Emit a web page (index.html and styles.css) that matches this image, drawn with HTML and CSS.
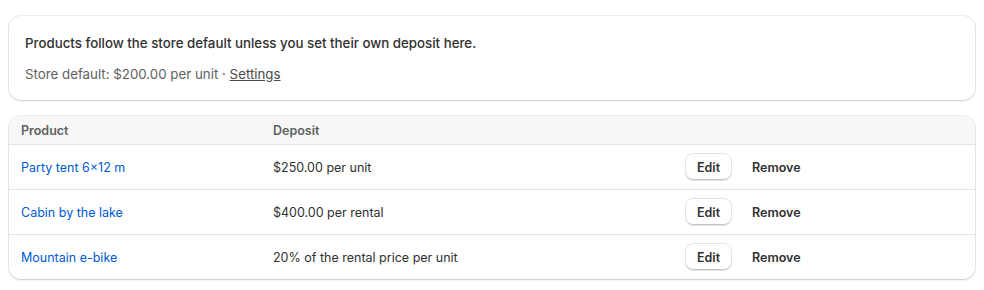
FILE: index.html
```html
<!DOCTYPE html>
<html lang="en">

<head>
    <meta charset="UTF-8">
    <meta name="viewport" content="width=device-width, initial-scale=1.0">
    <title>Product deposits</title>
    <link rel="stylesheet" href="styles.css">
</head>

<body>
    <div class="page">
        <div class="card intro">
            <p class="lead">Products follow the store default unless you set their own deposit here.</p>
            <p class="sub">Store default: $200.00 per unit · <a href="#" class="settings">Settings</a></p>
        </div>

        <div class="card table">
            <div class="row head">
                <div>Product</div>
                <div>Deposit</div>
                <div></div>
            </div>
            <div class="row">
                <div><a href="#" class="product">Party tent 6×12 m</a></div>
                <div>$250.00 per unit</div>
                <div class="actions">
                    <button class="edit">Edit</button>
                    <button class="remove">Remove</button>
                </div>
            </div>
            <div class="row">
                <div><a href="#" class="product">Cabin by the lake</a></div>
                <div>$400.00 per rental</div>
                <div class="actions">
                    <button class="edit">Edit</button>
                    <button class="remove">Remove</button>
                </div>
            </div>
            <div class="row">
                <div><a href="#" class="product">Mountain e-bike</a></div>
                <div>20% of the rental price per unit</div>
                <div class="actions">
                    <button class="edit">Edit</button>
                    <button class="remove">Remove</button>
                </div>
            </div>
        </div>
    </div>
</body>

</html>
```

FILE: styles.css
```css
body {
    margin: 0;
    padding: 0;
    font-family: 'Inter', 'Noto Sans', sans-serif;
    font-size: 13px;
    color: #303030;
    background: #ffffff;
}

.page {
    display: flex;
    flex-direction: column;
    gap: 16px;
    padding: 16px 9px;
}

.card {
    background: #ffffff;
    border-radius: 12px;
    box-shadow: 0 0 0 1px rgba(0, 0, 0, 0.07), 0 1px 2px rgba(0, 0, 0, 0.14);
    overflow: hidden;
}

.intro {
    padding: 17px 16px 16px;
    font-size: 13.3px;
}

.intro p {
    margin: 0;
    line-height: 20px;
}

.lead {
    font-weight: 500;
    color: #303030;
}

.sub {
    margin-top: 11px !important;
    color: #616161;
}

.settings {
    color: #4a4a4a;
    text-decoration: underline;
}

.table {
    font-size: 12.5px;
}

.row {
    display: grid;
    grid-template-columns: 252px 412px auto;
    align-items: center;
    padding: 0 12px;
    height: 44px;
    border-top: 1px solid #e3e3e3;
}

.row.head {
    height: 28px;
    border-top: none;
    background: #f7f7f7;
    color: #616161;
    font-weight: 600;
}

.product {
    color: #005bd3;
    text-decoration: none;
}

.actions {
    display: flex;
    align-items: center;
    gap: 8px;
}

button {
    font-family: inherit;
    font-size: 12.5px;
    font-weight: 600;
    color: #303030;
    cursor: pointer;
}

.edit {
    height: 28px;
    padding: 0 11px;
    background: #ffffff;
    border: 1px solid #e3e3e3;
    border-radius: 8px;
    box-shadow: inset 0 -1px 0 #c4c4c4;
}

.remove {
    background: none;
    border: none;
    padding: 0 12px;
}
```
